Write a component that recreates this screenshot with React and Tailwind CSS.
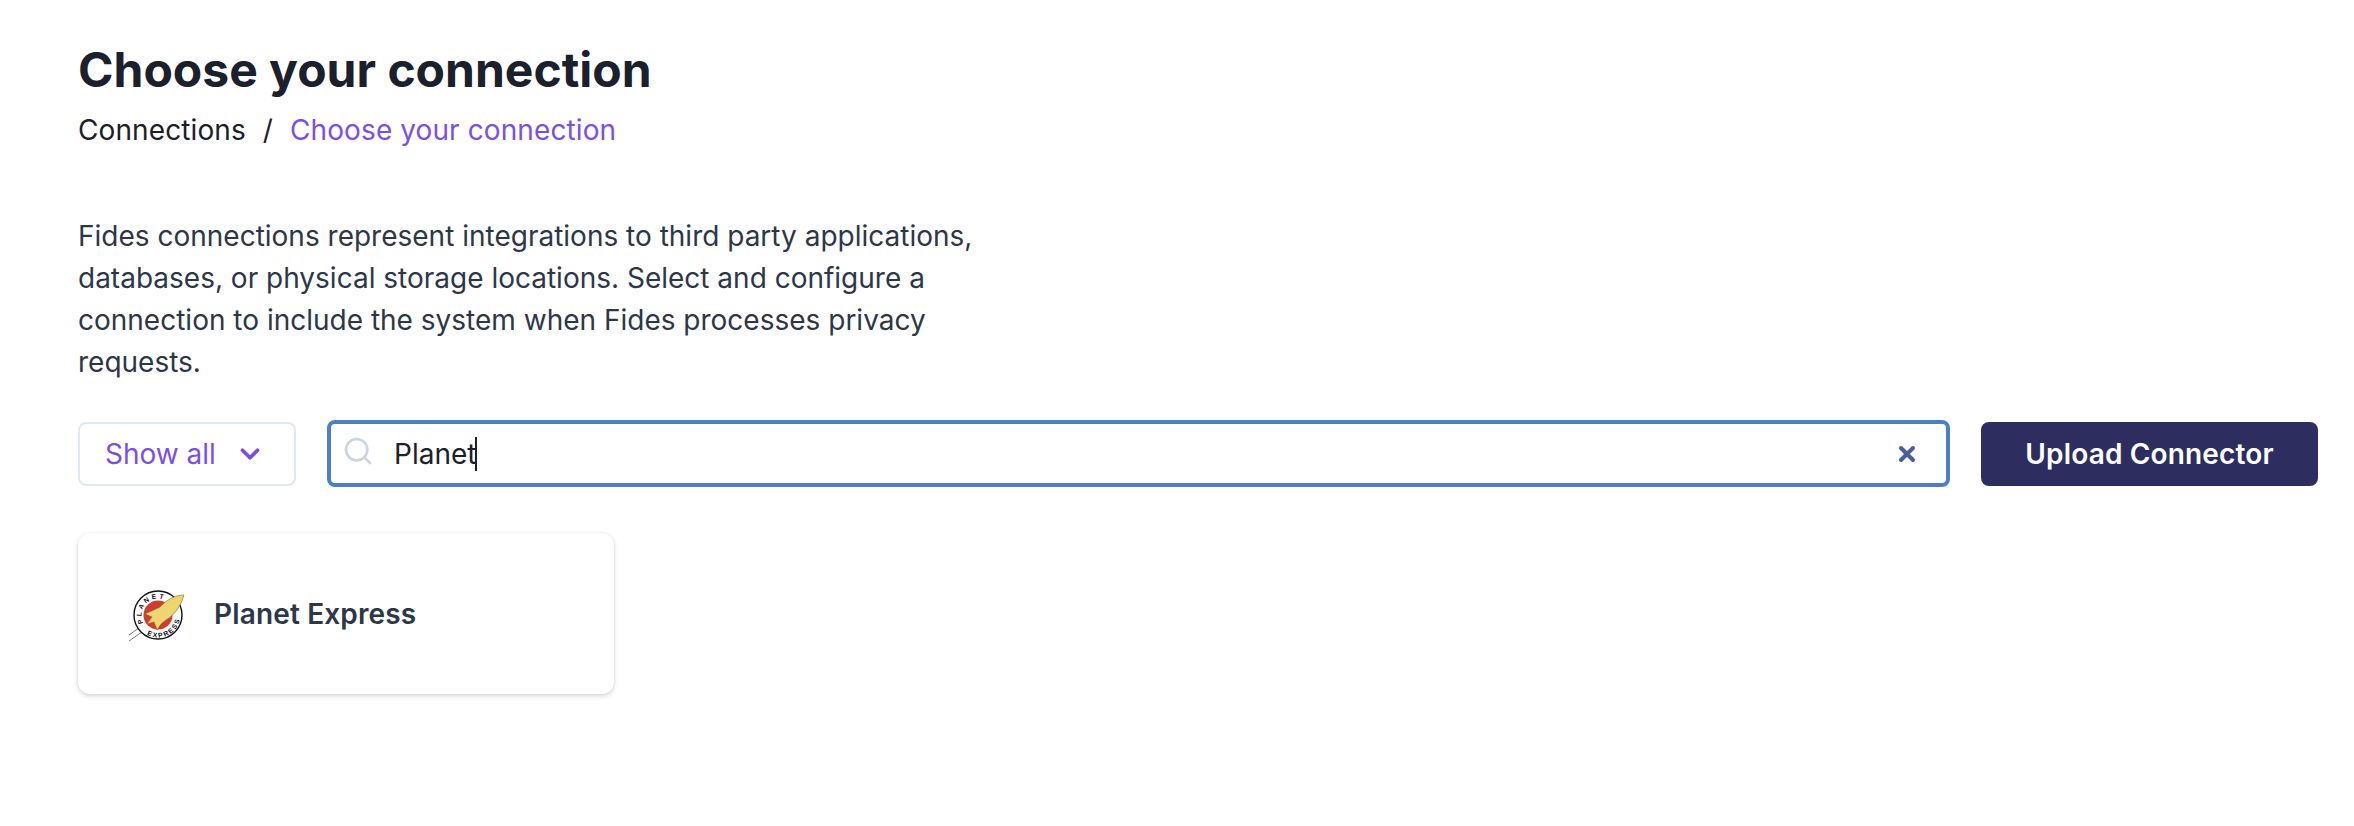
import { ChevronDown, Search, X } from "lucide-react"

function PlanetLogo() {
    return (
        <svg width="56" height="56" viewBox="0 0 56 56" className="shrink-0">
            <line x1="17" y1="37" x2="0" y2="49" stroke="#555" strokeWidth="0.8" />
            <line x1="20" y1="41" x2="0" y2="55" stroke="#555" strokeWidth="0.8" />
            <circle cx="29" cy="29" r="24" fill="#fff" stroke="#111" strokeWidth="1.4" />
            <circle cx="29" cy="29" r="14.5" fill="#d23c2e" />
            <defs>
                <path id="logo-top" d="M 14.7 37.2 A 16.5 16.5 0 0 1 37.2 14.7" />
                <path id="logo-bottom" d="M 17.75 48.5 A 22.5 22.5 0 0 0 51.5 29" />
            </defs>
            <text fontFamily="Liberation Sans, sans-serif" fontSize="6.8" fontWeight="700" fill="#111" letterSpacing="2.4">
                <textPath href="#logo-top">PLANET</textPath>
            </text>
            <text fontFamily="Liberation Sans, sans-serif" fontSize="6.8" fontWeight="700" fill="#111" letterSpacing="1.6">
                <textPath href="#logo-bottom">EXPRESS</textPath>
            </text>
            <path d="M55 9 C46 9 37 14 31 21 L16 28 L23 31 L18 38 L25 36 L28 44 L32 38 L37 34 C46 29 52 19 55 9 Z" fill="#eed56f" stroke="#7a6826" strokeWidth="0.6" />
        </svg>
    )
}

function App() {
    return (
        <div className="h-[826px] bg-white pl-[78px] pr-9 pt-[41px] font-['Inter',sans-serif] overflow-hidden">
            <h1 className="text-[48px] leading-[58px] font-bold text-[#1a202c]">Choose your connection</h1>
            <div className="mt-[11px] flex items-center text-[28px] leading-[40px] tracking-[0.1px] text-[#1a202c]">
                <span>Connections</span>
                <span className="mx-[17px]">/</span>
                <span className="text-[#7b4fe9]">Choose your connection</span>
            </div>
            <p className="mt-[65px] w-[930px] text-[28px] leading-[42px] text-[#2d3748]">
                Fides connections represent integrations to third party applications, databases, or physical storage locations. Select and configure a connection to include the system when Fides processes privacy requests.
            </p>
            <div className="mt-[37px] flex items-center gap-[31px]">
                <button className="flex h-[64px] w-[218px] shrink-0 items-center justify-between rounded-lg border-2 border-[#e2e8f0] pl-[25px] pr-[29px] text-[28px] text-[#7b4fe9]">
                    Show all
                    <ChevronDown size={30} strokeWidth={3} />
                </button>
                <div className="relative flex h-[67px] flex-1 items-center rounded-lg border-[4px] border-[#4a80c8] pl-[63px] pr-[27px]">
                    <Search size={32} strokeWidth={2} className="absolute left-[11px] top-[11px] text-[#cbd5e0]" />
                    <span className="text-[28px] text-[#1a202c]">Planet</span>
                    <span className="ml-[-1px] h-[34px] w-[2px] bg-[#1a202c]"></span>
                    <X size={24} strokeWidth={4} className="ml-auto text-[#4a5f97]" />
                </div>
                <button className="h-[64px] w-[337px] shrink-0 rounded-lg bg-[#2d2e5f] text-[28px] font-semibold tracking-[0.15px] text-white">
                    Upload Connector
                </button>
            </div>
            <div className="mt-[46px] flex h-[161px] w-[536px] items-center gap-[29px] rounded-xl bg-white pl-[51px] shadow-[0_2px_5px_rgba(0,0,0,0.16),0_0_3px_rgba(0,0,0,0.06)]">
                <PlanetLogo />
                <span className="text-[28px] font-semibold tracking-[0.15px] text-[#2d3748]">Planet Express</span>
            </div>
        </div>
    )
}

export default App
